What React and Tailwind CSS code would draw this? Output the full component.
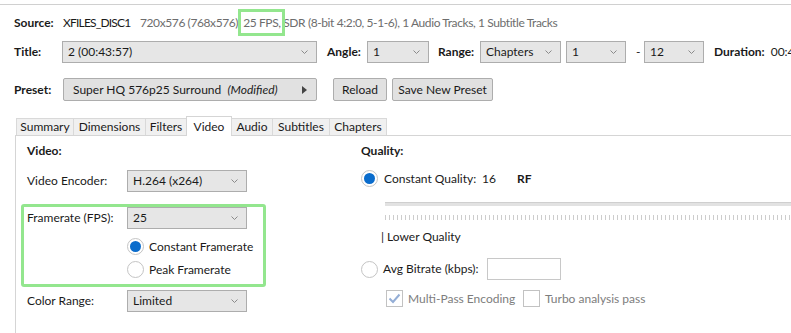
import React from 'react';

const Chevron = () => (
  <svg width="7" height="5" viewBox="0 0 7 5" className="shrink-0">
    <polyline points="0.5,0.5 3.5,3.5 6.5,0.5" fill="none" stroke="#8a8a8a" strokeWidth="1" />
  </svg>
);

function Select({ value, className }) {
  return (
    <div className={`shrink-0 flex items-center justify-between h-[22px] border border-[#adadad] bg-[#e6e6e6] pl-[5px] pr-[8px] ${className}`}>
      <span>{value}</span>
      <Chevron />
    </div>
  );
}

function Radio({ checked }) {
  return (
    <span className="flex items-center justify-center w-[17px] h-[17px] rounded-full border border-[#c4c4c4] bg-white shrink-0">
      {checked && <span className="w-[11px] h-[11px] rounded-full bg-[#0a6ccc]" />}
    </span>
  );
}

function Checkbox({ checked }) {
  return (
    <span className="flex items-center justify-center w-[17px] h-[17px] border border-[#c2c2c2] bg-white shrink-0">
      {checked && (
        <svg width="13" height="11" viewBox="0 0 13 11">
          <polyline points="1.5,5.5 5,9 11.5,1.5" fill="none" stroke="#94aed6" strokeWidth="2" />
        </svg>
      )}
    </span>
  );
}

const Tab = ({ label, active, className }) =>
  active ? (
    <div className={`shrink-0 h-[20px] -mb-px bg-white border border-b-0 border-[#d5d5d5] flex items-center justify-center ${className}`}>
      {label}
    </div>
  ) : (
    <div className={`shrink-0 h-[17px] bg-[#f0f0f0] border border-b-0 border-[#d9d9d9] -ml-px flex items-center justify-center ${className}`}>
      {label}
    </div>
  );

export default function App() {
  return (
    <div className="w-[791px] h-[333px] overflow-hidden bg-white text-[12px] leading-none text-[#1a1a1a] font-['Lato',sans-serif]">
      <div className="h-[4px]" />
      <div className="border-t border-[#d0d0d0]" />

      {/* source */}
      <div className="mt-[8px] h-[20px] flex items-center whitespace-nowrap [&>*]:shrink-0">
        <span className="ml-[14px] w-[49px] font-bold">Source:</span>
        <span className="w-[77px] tracking-[-0.8px]">XFILES_DISC1</span>
        <span className="text-[#6d6d6d] tracking-[-0.4px]">720x576 (768x576),&nbsp;</span>
        <span className="relative text-[#6d6d6d] tracking-[-0.4px]">
          25 FPS,
          <span className="absolute -left-[5px] -right-[4px] -top-[8px] -bottom-[7px] border-[3px] border-[#93e68e]" />
        </span>
        <span className="text-[#6d6d6d] tracking-[-0.4px]">&nbsp;SDR (8-bit 4:2:0, 5-1-6), 1 Audio Tracks, 1 Subtitle Tracks</span>
      </div>

      {/* title row */}
      <div className="mt-[8px] h-[22px] flex items-center whitespace-nowrap [&>*]:shrink-0">
        <span className="ml-[14px] w-[48px] font-bold">Title:</span>
        <Select value="2  (00:43:57)" className="w-[255px]" />
        <span className="ml-[10px] w-[40px] font-bold">Angle:</span>
        <Select value="1" className="w-[62px]" />
        <span className="ml-[9px] w-[42px] font-bold">Range:</span>
        <Select value="Chapters" className="w-[81px]" />
        <Select value="1" className="ml-[5px] w-[60px]" />
        <span className="ml-[10px] w-[8px]">-</span>
        <Select value="12" className="w-[60px]" />
        <span className="ml-[10px] font-bold">Duration:</span>
        <span className="ml-[6px]">00:43:57</span>
      </div>

      {/* preset row */}
      <div className="mt-[15px] h-[23px] flex items-center whitespace-nowrap [&>*]:shrink-0">
        <span className="ml-[14px] w-[49px] font-bold">Preset:</span>
        <div className="w-[254px] h-[23px] flex items-center justify-between border border-[#adadad] bg-[#e1e1e1] rounded-[2px] pl-[9px] pr-[9px]">
          <span>
            Super HQ 576p25 Surround&nbsp;&nbsp;<i>(Modified)</i>
          </span>
          <svg width="5" height="8" viewBox="0 0 5 8">
            <polygon points="0,0 5,4 0,8" fill="#444" />
          </svg>
        </div>
        <div className="ml-[16px] w-[54px] h-[23px] flex items-center justify-center border border-[#adadad] bg-[#e1e1e1] rounded-[2px]">Reload</div>
        <div className="ml-[5px] w-[101px] h-[23px] flex items-center justify-center border border-[#adadad] bg-[#e1e1e1] rounded-[2px]">Save New Preset</div>
      </div>

      {/* tabs */}
      <div className="mt-[15px] h-[19px] flex items-end pl-[16px] relative z-10">
        <Tab label="Summary" className="w-[58px] ml-0" />
        <Tab label="Dimensions" className="w-[73px]" />
        <Tab label="Filters" className="w-[42px]" />
        <Tab label="Video" active className="w-[46px] -ml-px" />
        <Tab label="Audio" className="w-[42px]" />
        <Tab label="Subtitles" className="w-[58px]" />
        <Tab label="Chapters" className="w-[58px]" />
      </div>

      {/* panel */}
      <div className="ml-[15px] border-t border-l border-[#d5d5d5] h-[220px] flex whitespace-nowrap">
        {/* left column */}
        <div className="w-[345px] shrink-0 pl-[11px] flex flex-col">
          <div className="mt-[5px] h-[20px] flex items-center font-bold">Video:</div>
          <div className="mt-[9px] h-[22px] flex items-center">
            <span className="w-[100px]">Video Encoder:</span>
            <Select value="H.264 (x264)" className="w-[120px]" />
          </div>
          <div className="mt-[12px] -ml-[6px] w-[245px] border-[3px] border-[#93e68e] rounded-[3px] pl-[3px] pb-[6px]">
            <div className="h-[22px] flex items-center">
              <span className="w-[100px]">Framerate (FPS):</span>
              <Select value="25" className="w-[120px]" />
            </div>
            <div className="mt-[9px] h-[17px] flex items-center pl-[100px]">
              <Radio checked />
              <span className="ml-[5px]">Constant Framerate</span>
            </div>
            <div className="mt-[6px] h-[17px] flex items-center pl-[100px]">
              <Radio />
              <span className="ml-[5px]">Peak Framerate</span>
            </div>
          </div>
          <div className="mt-[3px] h-[22px] flex items-center">
            <span className="w-[100px]">Color Range:</span>
            <Select value="Limited" className="w-[120px]" />
          </div>
        </div>

        {/* right column */}
        <div className="flex-1 flex flex-col">
          <div className="mt-[5px] h-[20px] flex items-center font-bold">Quality:</div>
          <div className="mt-[9px] h-[17px] flex items-center">
            <Radio checked />
            <span className="ml-[6px] w-[98px]">Constant Quality:</span>
            <span className="w-[35px]">16</span>
            <span className="font-bold">RF</span>
          </div>
          <div className="mt-[15px] ml-[24px] h-[4px] bg-[#e2e2e2] border-t border-[#cfcfcf]" />
          <div className="mt-[9px] ml-[24px] h-[5px] bg-[repeating-linear-gradient(90deg,#cdcdcd_0px,#cdcdcd_1px,transparent_1px,transparent_4px)]" />
          <div className="mt-[8px] ml-[20px] h-[18px] flex items-center">| Lower Quality</div>
          <div className="mt-[12px] h-[22px] flex items-center">
            <Radio />
            <span className="ml-[5px] w-[104px]">Avg Bitrate (kbps):</span>
            <div className="w-[74px] h-[22px] border border-[#c8c8c8] bg-white" />
          </div>
          <div className="mt-[10px] ml-[25px] h-[17px] flex items-center text-[#7d7d7d]">
            <Checkbox checked />
            <span className="ml-[5px] w-[115px]">Multi-Pass Encoding</span>
            <Checkbox />
            <span className="ml-[5px]">Turbo analysis pass</span>
          </div>
        </div>
      </div>
    </div>
  );
}
